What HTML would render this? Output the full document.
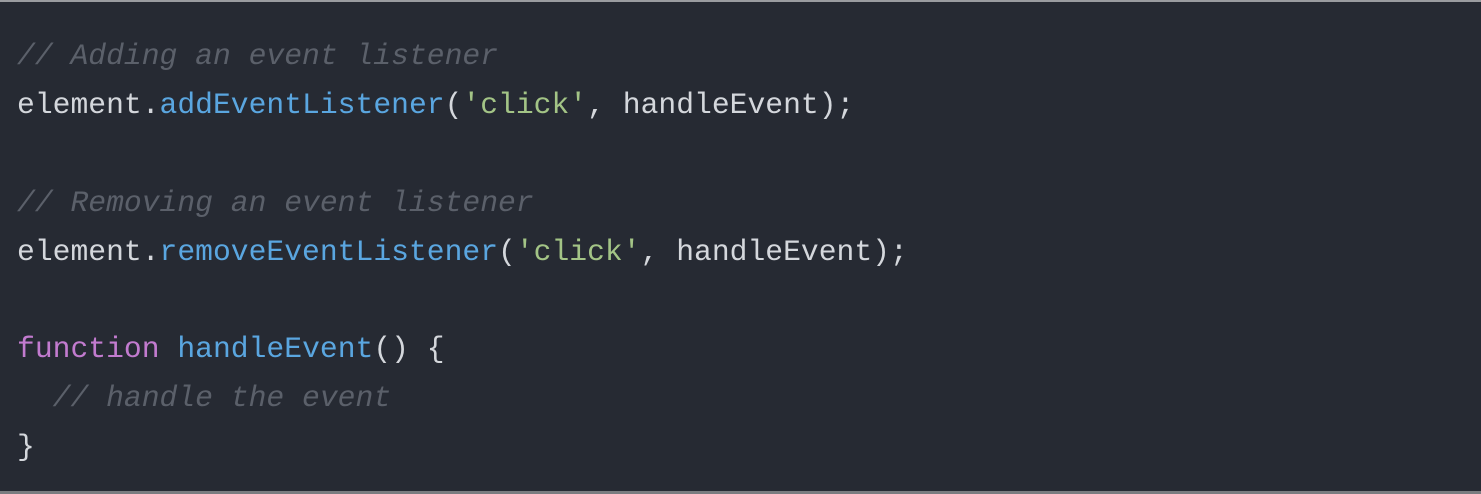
<!DOCTYPE html>
<html><head><style>
html,body{margin:0;padding:0;}
body{width:1481px;height:494px;background:#262a33;overflow:hidden;position:relative;}
.top{position:absolute;left:0;top:0;width:1481px;height:2px;background:#9a9ca0;}
.bot{position:absolute;left:0;top:491px;width:1481px;height:3px;background:#7a7c80;}
pre{position:absolute;left:17px;top:32px;margin:0;font-family:"Liberation Mono",monospace;font-size:29.7px;line-height:48.9px;color:#d4d7dc;}
.c{color:#5b606a;font-style:italic;}
.f{color:#5aa6e0;}
.s{color:#a3c486;}
.k{color:#c27bcf;}
</style></head><body>
<div class="top"></div>
<pre><span class="c">// Adding an event listener</span>
element.<span class="f">addEventListener</span>(<span class="s">'click'</span>, handleEvent);

<span class="c">// Removing an event listener</span>
element.<span class="f">removeEventListener</span>(<span class="s">'click'</span>, handleEvent);

<span class="k">function</span> <span class="f">handleEvent</span>() {
  <span class="c">// handle the event</span>
}</pre>
<div class="bot"></div>
</body></html>
